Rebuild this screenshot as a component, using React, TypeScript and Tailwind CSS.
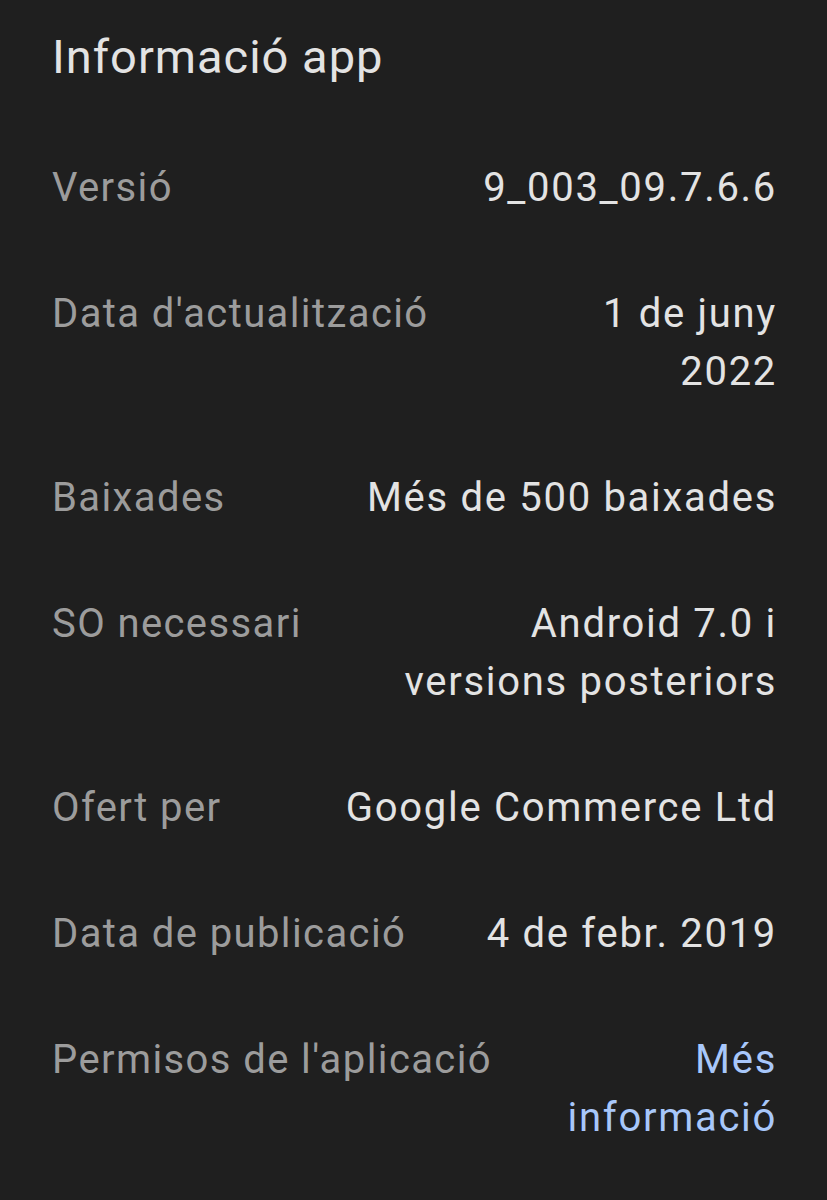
import React from "react";

type Row = { label: string; value: string[]; link?: boolean };

const rows: Row[] = [
  { label: "Versió", value: ["9_003_09.7.6.6"] },
  { label: "Data d'actualització", value: ["1 de juny", "2022"] },
  { label: "Baixades", value: ["Més de 500 baixades"] },
  { label: "SO necessari", value: ["Android 7.0 i", "versions posteriors"] },
  { label: "Ofert per", value: ["Google Commerce Ltd"] },
  { label: "Data de publicació", value: ["4 de febr. 2019"] },
  { label: "Permisos de l'aplicació", value: ["Més", "informació"], link: true },
];

export default function App() {
  return (
    <div
      className="w-[827px] h-[1200px] bg-[#1f1f1f] pl-[52px] pr-[50px] pt-[29px] overflow-hidden"
      style={{ fontFamily: "Roboto, 'Noto Sans', sans-serif" }}
    >
      <h1 className="text-[47px] leading-[56px] tracking-[1px] text-[#e3e3e3] font-normal">Informació app</h1>
      <div className="mt-[74px] flex flex-col gap-[68px]">
        {rows.map((r) => (
          <div key={r.label} className="flex justify-between text-[40px] leading-[58px] tracking-[1.7px]">
            <div className="text-[#9c9c9c] whitespace-nowrap tracking-[1.4px]">{r.label}</div>
            <div className={`flex flex-col items-end text-right ${r.link ? "text-[#a8c7fa]" : "text-[#e3e3e3]"}`}>
              {r.value.map((v) => (
                <span key={v} className="whitespace-nowrap">{v}</span>
              ))}
            </div>
          </div>
        ))}
      </div>
    </div>
  );
}
